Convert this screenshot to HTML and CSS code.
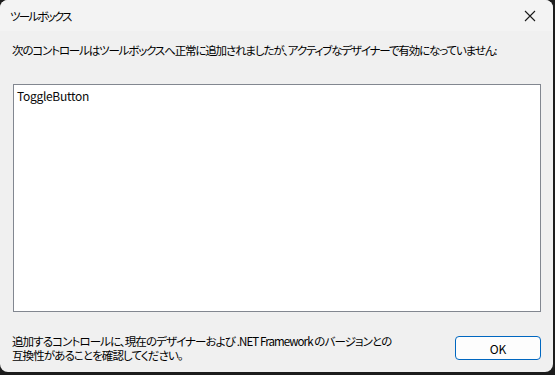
FILE: index.html
```html
<!DOCTYPE html>
<html>
<head>
  <title>ツールボックス</title>
  <link rel="stylesheet" href="styles.css">
</head>
<body>
  <div class="window">
    <div class="titlebar">
      <span class="title">ツールボックス</span>
      <span class="close">
        <svg width="12" height="12" viewBox="0 0 12 12">
          <path d="M1 1 L11 11 M11 1 L1 11" stroke="#1a1a1a" stroke-width="1.1" fill="none"/>
        </svg>
      </span>
    </div>

    <div class="content">
      <p class="message">次のコントロールはツールボックスへ正常に追加されましたが、アクティブなデザイナーで有効になっていません:</p>

      <div class="list">
        <div class="item">ToggleButton</div>
      </div>

      <div class="footer">
        <p class="note">追加するコントロールに、現在のデザイナーおよび .NET Framework のバージョンとの<br>互換性があることを確認してください。</p>
        <button class="ok">OK</button>
      </div>
    </div>
  </div>
</body>
</html>
```

FILE: styles.css
```css
body {
  margin: 0;
  padding: 0;
  background: #1c1c1c;
  font-family: "Noto Sans CJK JP", "Noto Sans", sans-serif;
  font-size: 11.5px;
  font-feature-settings: "palt";
  color: #000;
}

.window {
  width: 553px;
  height: 372px;
  background: #f0f0f0;
  border-radius: 8px;
  overflow: hidden;
  display: flex;
  flex-direction: column;
}

.titlebar {
  flex-shrink: 0;
  height: 31px;
  background: #f3f3f3;
  display: flex;
  align-items: center;
  justify-content: space-between;
  padding-left: 10px;
}

.title {
  line-height: 16px;
  letter-spacing: -1.8px;
}

.close {
  width: 46px;
  height: 31px;
  display: flex;
  align-items: center;
  justify-content: center;
}

.content {
  flex: 1;
  display: flex;
  flex-direction: column;
  padding: 0 12px 0 13px;
}

.message {
  margin: 11px 0 0 -1px;
  line-height: 16px;
  letter-spacing: -1.15px;
  white-space: nowrap;
}

.list {
  flex-shrink: 0;
  margin-top: 26px;
  height: 226px;
  background: #fff;
  border: 1px solid #828790;
}

.item {
  padding: 3px 3px 0 3px;
  line-height: 16px;
  font-size: 12px;
  letter-spacing: -0.3px;
  color: #0a0a0a;
}

.footer {
  display: flex;
  justify-content: space-between;
  align-items: flex-start;
  margin-top: 22px;
}

.note {
  margin: 0 0 0 -1px;
  line-height: 14px;
  letter-spacing: -0.9px;
  white-space: nowrap;
}

.ok {
  flex-shrink: 0;
  width: 86px;
  height: 24px;
  margin-top: 2px;
  background: #fdfdfd;
  border: 1px solid #0067c0;
  border-radius: 4px;
  font-family: "Noto Sans CJK JP", "Noto Sans", sans-serif;
  font-size: 12px;
  color: #000;
  padding: 0;
}
```
